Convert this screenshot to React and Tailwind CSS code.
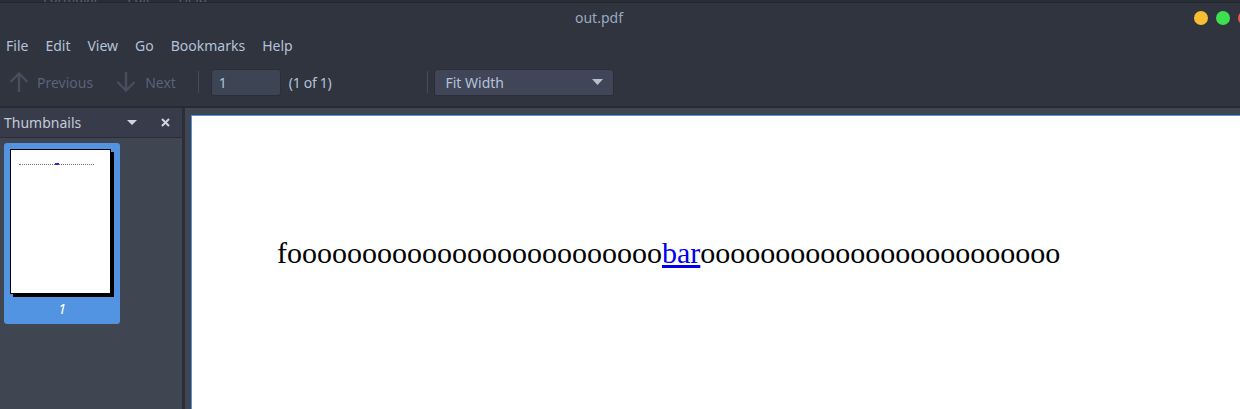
import React from 'react';

const menuItems = ['File', 'Edit', 'View', 'Go', 'Bookmarks', 'Help'];

const ArrowIcon = ({ down = false }) => (
  <svg width="20" height="20" viewBox="0 0 20 20" className={down ? 'rotate-180' : ''}>
    <path d="M1.5 10 L10 1.5 L18.5 10 M10 1.5 V20" fill="none" stroke="#474e5d" strokeWidth="2.4" />
  </svg>
);

const App = () => {
  return (
    <div className="w-[1240px] h-[409px] overflow-hidden bg-[#2f343f] flex flex-col font-['Noto_Sans',sans-serif] text-[14px]">
      {/* strip of the window behind */}
      <div className="h-[3px] bg-[#292d36] overflow-hidden border-b border-[#23262e]">
        <div className="flex gap-[28px] pl-[8px] -mt-[11px] text-[13px] text-[#5a6070]">
          <span>··</span>
          <span>Formular</span>
          <span>Edit</span>
          <span>Help</span>
        </div>
      </div>

      {/* title bar */}
      <div className="h-[30px] flex items-center">
        <span className="ml-[575px] text-[#9aa9bf] text-[14px] leading-none">out.pdf</span>
        <div className="ml-auto flex items-center gap-[8px] -mr-[12px]">
          <span className="w-[14px] h-[14px] rounded-full bg-[#f7bd33]"></span>
          <span className="w-[14px] h-[14px] rounded-full bg-[#3ee04f]"></span>
          <span className="w-[14px] h-[14px] rounded-full bg-[#ef5350]"></span>
        </div>
      </div>

      {/* menu bar */}
      <div className="h-[26px] flex items-center gap-[17px] pl-[6px] text-[#b3c2d8]">
        {menuItems.map((m) => (
          <span key={m} className="leading-none">{m}</span>
        ))}
      </div>

      {/* toolbar */}
      <div className="h-[49px] flex items-center border-b-2 border-[#262a32] pb-[1px]">
        <div className="flex items-center ml-[9px]">
          <ArrowIcon />
          <span className="ml-[8px] text-[#59637a]">Previous</span>
        </div>
        <div className="flex items-center ml-[23px]">
          <ArrowIcon down />
          <span className="ml-[9px] text-[#59637a]">Next</span>
        </div>
        <div className="ml-[22px] w-px h-[22px] bg-[#454b58]"></div>
        <div className="ml-[12px] w-[70px] h-[27px] rounded-[3px] bg-[#3d4454] border border-[#2a2e37] flex items-center pl-[7px] text-[#b3c2d8]">
          1
        </div>
        <span className="ml-[8px] text-[#b3c2d8] tracking-[-0.3px]">(1 of 1)</span>
        <div className="ml-[96px] w-px h-[22px] bg-[#454b58]"></div>
        <div className="ml-[6px] w-[180px] h-[27px] rounded-[3px] bg-[#404657] border border-[#2a2e37] flex items-center pl-[10px] pr-[10px] text-[#b3c2d8]">
          <span>Fit Width</span>
          <svg width="11" height="6" viewBox="0 0 11 6" className="ml-auto">
            <path d="M0 0 H11 L5.5 6 Z" fill="#b7c0cc" />
          </svg>
        </div>
      </div>

      {/* main */}
      <div className="flex-1 flex min-h-0">
        {/* sidebar */}
        <div className="w-[182px] bg-[#404552] flex flex-col">
          <div className="h-[30px] bg-[#383c4a] border-b border-[#2b2e39] flex items-center pl-[4px] pr-[12px] text-[#c3cbd8]">
            <span>Thumbnails</span>
            <svg width="10" height="5" viewBox="0 0 10 5" className="ml-auto">
              <path d="M0 0 H10 L5 5 Z" fill="#d0d6de" />
            </svg>
            <svg width="9" height="9" viewBox="0 0 9 9" className="ml-[24px]">
              <path d="M1 1 L8 8 M8 1 L1 8" stroke="#d0d6de" strokeWidth="2" />
            </svg>
          </div>
          <div className="pt-[5px] pl-[4px]">
            <div className="w-[116px] h-[181px] rounded-[3px] bg-[#5294e2] flex flex-col items-start pt-[6px] pl-[6px]">
              <div className="w-[101px] h-[145px] bg-white border border-black shadow-[3px_3px_0_0_#000] pt-[13px] pl-[8px]">
                <div className="flex items-center w-[75px] h-[2px]">
                  <div className="w-[36px] h-px border-t border-dotted border-[#777]"></div>
                  <div className="w-[4px] h-[2px] bg-[#2a2ad0]"></div>
                  <div className="w-[35px] h-px border-t border-dotted border-[#777]"></div>
                </div>
              </div>
              <span className="self-center -ml-[6px] mt-[5px] italic text-white text-[14px] leading-[20px]">1</span>
            </div>
          </div>
        </div>

        {/* splitter */}
        <div className="w-[3px] bg-[#2b2e37]"></div>

        {/* document area */}
        <div className="flex-1 bg-[#404552] pl-[6px] pt-[7px] overflow-hidden">
          <div className="w-[1100px] h-full bg-white border-l border-t border-[#5294e2] pl-[85px] pt-[122px]">
            <p className="font-['Liberation_Serif',serif] text-[30px] leading-[30px] text-black whitespace-nowrap">
              fooooooooooooooooooooooooo<span className="text-[#0000ee] underline decoration-[#0000ee]">bar</span>oooooooooooooooooooooooo
            </p>
          </div>
        </div>
      </div>
    </div>
  );
};

export default App;
